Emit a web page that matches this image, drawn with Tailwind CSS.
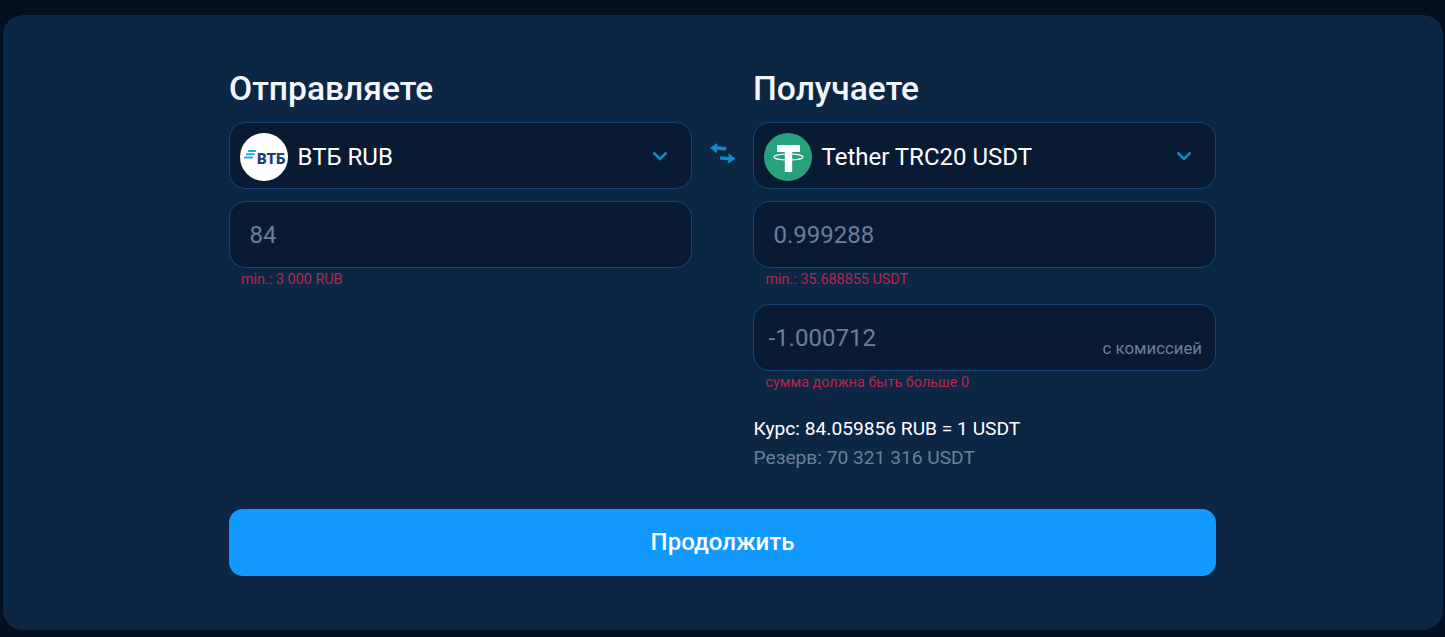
<!DOCTYPE html>
<html lang="ru">

<head>
  <meta charset="UTF-8">
  <title>Обмен</title>
  <script src="https://cdn.jsdelivr.net/npm/@tailwindcss/browser@4"></script>
</head>

<body class="bg-[#040f20] h-[637px] overflow-hidden font-[Roboto,sans-serif]">
  <div class="ml-[3px] mt-[15px] w-[1440px] h-[615px] rounded-[20px] bg-[#0c2744] pt-[51px] pl-[226px]">
    <div class="flex w-[987px]">
      <!-- send -->
      <div class="w-[463px]">
        <h2 class="pt-[1px] text-[33.6px] leading-[44px] font-medium text-[#f3f7fb]">Отправляете</h2>
        <div class="mt-[11px] h-[67px] flex items-center pt-[2px] pl-[10px] pr-[23px] rounded-[16px] border border-[#174478] bg-[#081b33]">
          <svg class="w-[48px] h-[48px]" viewBox="0 0 48 48">
            <circle cx="24" cy="24" r="24" fill="#fff" />
            <path d="M8.500 17H16.500l-.7 2H7.800zM6.500 20.300H15l-.7 2H5.800zM4.500 23.500H13.500l-.7 2H3.800z" fill="#1ea7e1" />
            <text x="17" y="31" font-family="Roboto" font-weight="900" font-size="15" fill="#1f3a7d">ВТБ</text>
          </svg>
          <span class="ml-[9.500px] text-[24px] text-white">ВТБ RUB</span>
          <svg class="ml-auto -mt-[2px] w-[16px] h-[10px] text-[#0f8ccf]" viewBox="0 0 16 10" fill="none" stroke="currentColor" stroke-width="2.600">
            <path d="M1.500 1.500 8 8l6.500-6.500" />
          </svg>
        </div>
        <div class="mt-[12px] h-[67px] flex items-center pl-[19.500px] rounded-[16px] border border-[#174478] bg-[#081b33] text-[24px] text-[#6b7f98]">84</div>
        <p class="mt-[2px] pl-[12px] text-[14.400px] leading-[20px] text-[#b8274a]">min.: 3 000 RUB</p>
      </div>

      <!-- swap -->
      <div class="w-[61px] flex justify-center pt-[77px]">
        <svg class="w-[26px] h-[21px] text-[#0f8ccf]" viewBox="0 0 26 21" fill="currentColor">
          <path d="M0 4.800 7.500 0l-.2 3.200 9 .7-.3 3.500-9-.7-.2 3.900zM25.500 15.800 18.200 20.800l.1-3.500-8.300-.6.3-3.500 8.200.7.1-3.700z" />
        </svg>
      </div>

      <!-- receive -->
      <div class="w-[463px]">
        <h2 class="pt-[1px] text-[33.6px] leading-[44px] font-medium text-[#f3f7fb]">Получаете</h2>
        <div class="mt-[11px] h-[67px] flex items-center pt-[2px] pl-[10px] pr-[23px] rounded-[16px] border border-[#174478] bg-[#081b33]">
          <svg class="w-[48px] h-[48px]" viewBox="0 0 48 48">
            <circle cx="24" cy="24" r="24" fill="#26a17b" />
            <path d="M13 12h23v7h-7.800v20h-7.400V19H13z" fill="#fff" />
            <ellipse cx="24.500" cy="24" rx="14.500" ry="3" fill="none" stroke="#fff" stroke-width="1.100" />
          </svg>
          <span class="ml-[9.500px] text-[24px] text-white">Tether TRC20 USDT</span>
          <svg class="ml-auto -mt-[2px] w-[16px] h-[10px] text-[#0f8ccf]" viewBox="0 0 16 10" fill="none" stroke="currentColor" stroke-width="2.600">
            <path d="M1.500 1.500 8 8l6.500-6.500" />
          </svg>
        </div>
        <div class="mt-[12px] h-[67px] flex items-center pl-[19.500px] rounded-[16px] border border-[#174478] bg-[#081b33] text-[24px] text-[#6b7f98]">0.999288</div>
        <p class="mt-[2px] pl-[12.500px] text-[14.400px] leading-[20px] text-[#b8274a]">min.: 35.688855 USDT</p>
        <div class="relative mt-[14px] h-[67px] flex items-center pl-[14.500px] rounded-[16px] border border-[#174478] bg-[#081b33] text-[24px] text-[#6b7f98]">
          -1.000712
          <span class="absolute right-[13px] bottom-[11px] text-[16.800px] leading-[22px] text-[#6b7f98]">с комиссией</span>
        </div>
        <p class="mt-[2px] pl-[12.500px] text-[14.400px] leading-[20px] text-[#b8274a]">сумма должна быть больше 0</p>
        <p class="mt-[21px] pl-[0.500px] text-[19.200px] leading-[29px] text-white">Курс: 84.059856 RUB = 1 USDT</p>
        <p class="pl-[0.500px] text-[19.200px] leading-[29px] text-[#6b7f98]">Резерв: 70 321 316 USDT</p>
      </div>
    </div>
    <button class="mt-[37px] block w-[987px] h-[67px] pb-[2px] rounded-[14px] bg-[#1299fd] text-[24px] font-medium text-white">Продолжить</button>
  </div>
</body>

</html>
